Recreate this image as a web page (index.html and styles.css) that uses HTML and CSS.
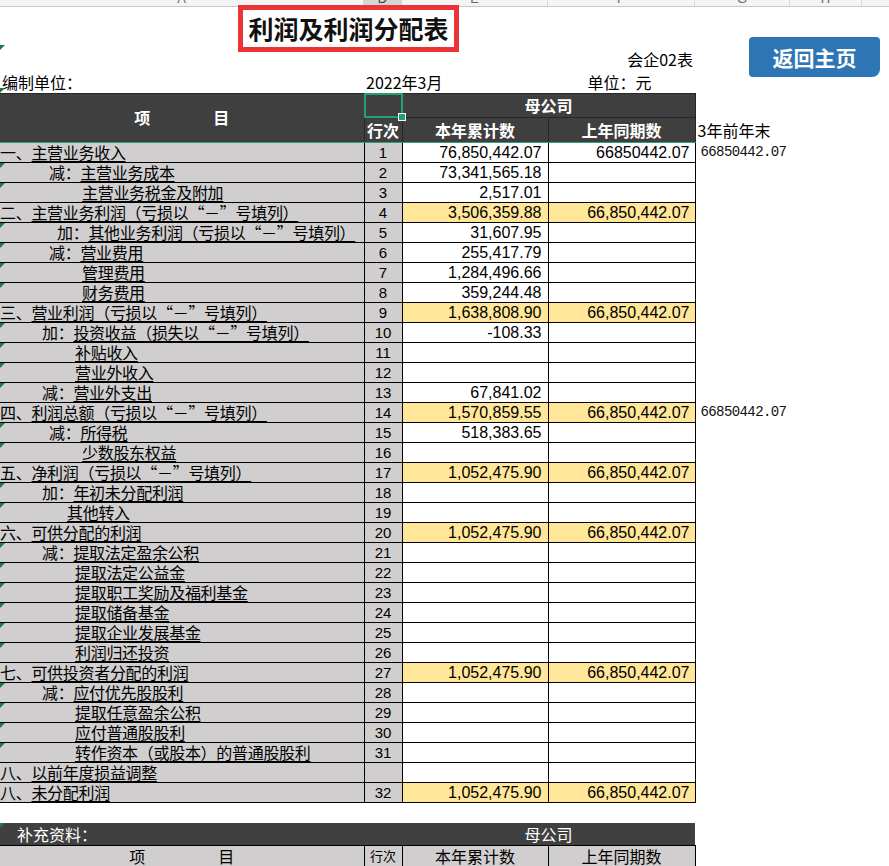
FILE: index.html
```html
<!DOCTYPE html>
<html lang="zh-CN">
<head>
<meta charset="utf-8">
<title>利润及利润分配表</title>
<link rel="stylesheet" href="styles.css">
</head>
<body>
<div class="colheads">
  <div class="ch ch-a"><span>A</span></div>
  <div class="ch ch-d"><span>D</span></div>
  <div class="ch ch-e"><span>E</span></div>
  <div class="ch ch-f"><span>F</span></div>
  <div class="ch ch-g"><span>G</span></div>
  <div class="ch ch-h"><span>H</span></div>
  <div class="ch ch-i"></div>
</div>

<div class="top">
  <div class="title-row mk-row"><h1 class="title">利润及利润分配表</h1></div>
  <div class="form-row">会企02表</div>
  <div class="info-row mk-row">
    <span class="unit-name">编制单位：</span>
    <span class="period">2022年3月</span>
    <span class="unit">单位：元</span>
  </div>
</div>

<a class="home-btn">返回主页</a>

<table class="report">
  <colgroup>
    <col class="c-a"><col class="c-d"><col class="c-e"><col class="c-f"><col class="c-g"><col>
  </colgroup>
  <thead>
    <tr class="h1">
      <th rowspan="2" class="item"><span>项</span><span>目</span></th>
      <th class="sel"></th>
      <th colspan="2">母公司</th>
      <td class="g"></td><td class="rest"></td>
    </tr>
    <tr class="h2">
      <th>行次</th><th>本年累计数</th><th>上年同期数</th>
      <td class="g extra">3年前年末</td><td class="rest"></td>
    </tr>
  </thead>
  <tbody>
    <tr><td class="lbl">一、<span class="u">主营业务收入</span></td><td class="no">1</td><td class="num">76,850,442.07</td><td class="num f">66850442.07</td><td class="g mono">66850442.07</td><td class="rest"></td></tr>
    <tr><td class="lbl mk p49">减：<span class="u">主营业务成本</span></td><td class="no">2</td><td class="num">73,341,565.18</td><td class="num f"></td><td class="g"></td><td class="rest"></td></tr>
    <tr><td class="lbl mk p82"><span class="u">主营业务税金及附加</span></td><td class="no">3</td><td class="num">2,517.01</td><td class="num f"></td><td class="g"></td><td class="rest"></td></tr>
    <tr class="hl"><td class="lbl">二、<span class="u">主营业务利润（亏损以“－”号填列）</span></td><td class="no">4</td><td class="num">3,506,359.88</td><td class="num f">66,850,442.07</td><td class="g"></td><td class="rest"></td></tr>
    <tr><td class="lbl mk p57">加：<span class="u">其他业务利润（亏损以“－”号填列）</span></td><td class="no">5</td><td class="num">31,607.95</td><td class="num f"></td><td class="g"></td><td class="rest"></td></tr>
    <tr><td class="lbl mk p49">减：<span class="u">营业费用</span></td><td class="no">6</td><td class="num">255,417.79</td><td class="num f"></td><td class="g"></td><td class="rest"></td></tr>
    <tr><td class="lbl mk p82"><span class="u">管理费用</span></td><td class="no">7</td><td class="num">1,284,496.66</td><td class="num f"></td><td class="g"></td><td class="rest"></td></tr>
    <tr><td class="lbl mk p82"><span class="u">财务费用</span></td><td class="no">8</td><td class="num">359,244.48</td><td class="num f"></td><td class="g"></td><td class="rest"></td></tr>
    <tr class="hl"><td class="lbl">三、<span class="u">营业利润（亏损以“－”号填列）</span></td><td class="no">9</td><td class="num">1,638,808.90</td><td class="num f">66,850,442.07</td><td class="g"></td><td class="rest"></td></tr>
    <tr><td class="lbl mk p42">加：<span class="u">投资收益（损失以“－”号填列）</span></td><td class="no">10</td><td class="num">-108.33</td><td class="num f"></td><td class="g"></td><td class="rest"></td></tr>
    <tr><td class="lbl mk p75"><span class="u">补贴收入</span></td><td class="no">11</td><td class="num"></td><td class="num f"></td><td class="g"></td><td class="rest"></td></tr>
    <tr><td class="lbl mk p75"><span class="u">营业外收入</span></td><td class="no">12</td><td class="num"></td><td class="num f"></td><td class="g"></td><td class="rest"></td></tr>
    <tr><td class="lbl mk p42">减：<span class="u">营业外支出</span></td><td class="no">13</td><td class="num">67,841.02</td><td class="num f"></td><td class="g"></td><td class="rest"></td></tr>
    <tr class="hl"><td class="lbl">四、<span class="u">利润总额（亏损以“－”号填列）</span></td><td class="no">14</td><td class="num">1,570,859.55</td><td class="num f">66,850,442.07</td><td class="g mono">66850442.07</td><td class="rest"></td></tr>
    <tr><td class="lbl mk p49">减：<span class="u">所得税</span></td><td class="no">15</td><td class="num">518,383.65</td><td class="num f"></td><td class="g"></td><td class="rest"></td></tr>
    <tr><td class="lbl mk p82"><span class="u">少数股东权益</span></td><td class="no">16</td><td class="num"></td><td class="num f"></td><td class="g"></td><td class="rest"></td></tr>
    <tr class="hl"><td class="lbl">五、<span class="u">净利润（亏损以“－”号填列）</span></td><td class="no">17</td><td class="num">1,052,475.90</td><td class="num f">66,850,442.07</td><td class="g"></td><td class="rest"></td></tr>
    <tr><td class="lbl mk p42">加：<span class="u">年初未分配利润</span></td><td class="no">18</td><td class="num"></td><td class="num f"></td><td class="g"></td><td class="rest"></td></tr>
    <tr><td class="lbl mk p67"><span class="u">其他转入</span></td><td class="no">19</td><td class="num"></td><td class="num f"></td><td class="g"></td><td class="rest"></td></tr>
    <tr class="hl"><td class="lbl">六、<span class="u">可供分配的利润</span></td><td class="no">20</td><td class="num">1,052,475.90</td><td class="num f">66,850,442.07</td><td class="g"></td><td class="rest"></td></tr>
    <tr><td class="lbl mk p42">减：<span class="u">提取法定盈余公积</span></td><td class="no">21</td><td class="num"></td><td class="num f"></td><td class="g"></td><td class="rest"></td></tr>
    <tr><td class="lbl mk p75"><span class="u">提取法定公益金</span></td><td class="no">22</td><td class="num"></td><td class="num f"></td><td class="g"></td><td class="rest"></td></tr>
    <tr><td class="lbl mk p75"><span class="u">提取职工奖励及福利基金</span></td><td class="no">23</td><td class="num"></td><td class="num f"></td><td class="g"></td><td class="rest"></td></tr>
    <tr><td class="lbl mk p75"><span class="u">提取储备基金</span></td><td class="no">24</td><td class="num"></td><td class="num f"></td><td class="g"></td><td class="rest"></td></tr>
    <tr><td class="lbl mk p75"><span class="u">提取企业发展基金</span></td><td class="no">25</td><td class="num"></td><td class="num f"></td><td class="g"></td><td class="rest"></td></tr>
    <tr><td class="lbl mk p75"><span class="u">利润归还投资</span></td><td class="no">26</td><td class="num"></td><td class="num f"></td><td class="g"></td><td class="rest"></td></tr>
    <tr class="hl"><td class="lbl">七、<span class="u">可供投资者分配的利润</span></td><td class="no">27</td><td class="num">1,052,475.90</td><td class="num f">66,850,442.07</td><td class="g"></td><td class="rest"></td></tr>
    <tr><td class="lbl mk p42">减：<span class="u">应付优先股股利</span></td><td class="no">28</td><td class="num"></td><td class="num f"></td><td class="g"></td><td class="rest"></td></tr>
    <tr><td class="lbl mk p75"><span class="u">提取任意盈余公积</span></td><td class="no">29</td><td class="num"></td><td class="num f"></td><td class="g"></td><td class="rest"></td></tr>
    <tr><td class="lbl mk p75"><span class="u">应付普通股股利</span></td><td class="no">30</td><td class="num"></td><td class="num f"></td><td class="g"></td><td class="rest"></td></tr>
    <tr><td class="lbl mk p75"><span class="u">转作资本（或股本）的普通股股利</span></td><td class="no">31</td><td class="num"></td><td class="num f"></td><td class="g"></td><td class="rest"></td></tr>
    <tr><td class="lbl">八、<span class="u">以前年度损益调整</span></td><td class="no"></td><td class="num"></td><td class="num f"></td><td class="g"></td><td class="rest"></td></tr>
    <tr class="hl"><td class="lbl">八、<span class="u">未分配利润</span></td><td class="no">32</td><td class="num">1,052,475.90</td><td class="num f">66,850,442.07</td><td class="g"></td><td class="rest"></td></tr>
  </tbody>
</table>

<div class="spacer"></div>

<table class="supp">
  <colgroup>
    <col class="c-a"><col class="c-d"><col class="c-e"><col class="c-f"><col class="c-g"><col>
  </colgroup>
  <tr class="s1">
    <td class="s-title mk">补充资料：</td><td class="s-dark"></td><td colspan="2" class="s-dark s-center">母公司</td><td class="g"></td><td class="rest"></td>
  </tr>
  <tr class="s2">
    <td class="s-cell s-item"><span>项</span><span>目</span></td><td class="s-cell s-no">行次</td><td class="s-cell">本年累计数</td><td class="s-cell">上年同期数</td><td class="g"></td><td class="rest"></td>
  </tr>
</table>
</body>
</html>
```

FILE: styles.css
```css
* { box-sizing: border-box; }

html, body {
  margin: 0;
  padding: 0;
}

body {
  width: 889px;
  height: 866px;
  overflow: hidden;
  position: relative;
  background: #fff;
  color: #000;
  font-family: "Noto Sans CJK SC", "Liberation Sans", sans-serif;
}

/* spreadsheet column header strip */
.colheads {
  display: flex;
  height: 7px;
  background: #f4f4f4;
  border-bottom: 1px solid #c8c8c8;
  overflow: hidden;
}
.ch {
  height: 100%;
  border-right: 1px solid #d8d8d8;
  text-align: center;
  font: 13px "Liberation Sans", sans-serif;
  color: #6b6b6b;
  line-height: 12px;
  overflow: hidden;
}
.ch span { display: block; margin-top: -7px; }
.ch-a { width: 364px; }
.ch-d { width: 38px; background: #d4d4d4; color: #444; }
.ch-e { width: 146px; }
.ch-f { width: 147px; }
.ch-g { width: 95px; }
.ch-h { width: 72px; }
.ch-i { flex: 1; border-right: none; }

/* top area */
.top { width: 695px; }
.title-row {
  height: 43px;
  display: flex;
  justify-content: center;
  align-items: flex-start;
  position: relative;
}
.title {
  margin: -2px 0 0 2px;
  width: 221px;
  height: 47px;
  border: 5px solid #ec3437;
  background: #fff;
  font-size: 25px;
  font-weight: 700;
  line-height: 36px;
  text-align: center;
  color: #111;
}
.form-row {
  height: 22px;
  line-height: 18px;
  font-size: 16px;
  text-align: right;
  padding-right: 2px;
}
.info-row {
  height: 21px;
  line-height: 20px;
  font-size: 16px;
  display: grid;
  grid-template-columns: 364px 184px 147px;
  position: relative;
}
.unit-name { padding-left: 2px; }
.period { padding-left: 2px; white-space: nowrap; }
.unit { text-align: center; padding-right: 4px; }

.mk-row::before {
  content: "";
  position: absolute;
  left: 0;
  bottom: 0;
  border-top: 5px solid #1f7a3f;
  border-right: 5px solid transparent;
}

/* home button */
.home-btn {
  position: absolute;
  left: 749px;
  top: 37px;
  width: 131px;
  height: 40px;
  background: #2e75b6;
  color: #fff;
  font-size: 21px;
  font-weight: 700;
  display: flex;
  align-items: center;
  justify-content: center;
  border-radius: 4px 4px 8px 4px;
  text-decoration: none;
}

/* main table */
table {
  border-collapse: collapse;
  table-layout: fixed;
  width: 889px;
}
.c-a { width: 364px; }
.c-d { width: 38px; }
.c-e { width: 146px; }
.c-f { width: 147px; }
.c-g { width: 95px; }

.report thead th {
  background: #3f3f3f;
  color: #fff;
  font-size: 16px;
  font-weight: 700;
  border: 1px solid #262626;
  padding: 0;
  line-height: 20px;
}
.report .h1 th { height: 24px; padding-bottom: 2px; }
.report .h2 th { height: 22px; border-bottom: 1px solid #2f9f80; }
.report th.item { border-left: none; border-bottom: 1px solid #2f9f80; padding-bottom: 3px; }
.report th.item span + span { margin-left: 63px; }
.report .h2 td { border-bottom: 1px solid #2f9f80; }

.report th.sel { position: relative; }
.report th.sel::after {
  content: "";
  position: absolute;
  left: -1px;
  top: -1px;
  right: -1px;
  bottom: -1px;
  border: 2px solid #22a06f;
}
.report th.sel::before {
  content: "";
  position: absolute;
  right: -4px;
  bottom: -4px;
  width: 6px;
  height: 6px;
  background: #22a06f;
  border: 1px solid #fff;
  z-index: 2;
}

.extra {
  font-size: 16px;
  white-space: nowrap;
  padding-left: 2px;
  vertical-align: bottom;
  line-height: 23px;
}

.report tbody td {
  height: 20px;
  padding: 0;
  border-bottom: 1px solid #000;
  border-right: 1px solid #000;
  line-height: 19px;
  white-space: nowrap;
  overflow: hidden;
}
.report td.g, .report td.rest,
.supp td.g, .supp td.rest {
  border: none;
  background: #fff;
}
.report tbody td.g { overflow: visible; }

.lbl {
  background: #d0cece;
  font-size: 16px;
  letter-spacing: -0.3px;
  position: relative;
}
.u {
  text-decoration: underline;
  text-decoration-thickness: 1px;
  text-underline-offset: 2px;
}
.p42 { padding-left: 42px !important; }
.p49 { padding-left: 49px !important; }
.p57 { padding-left: 57px !important; }
.p67 { padding-left: 67px !important; }
.p75 { padding-left: 75px !important; }
.p82 { padding-left: 82px !important; }

.mk::before {
  content: "";
  position: absolute;
  left: 0;
  top: 0;
  border-top: 5px solid #1f7a3f;
  border-right: 5px solid transparent;
}

.no {
  background: #d0cece;
  text-align: center;
  font: 15px "Liberation Sans", sans-serif;
  vertical-align: bottom;
}
.num {
  text-align: right;
  font: 16px "Liberation Sans", sans-serif;
  padding-right: 6px !important;
  background: #fff;
}
.num.f { padding-right: 5px !important; }
.hl .num { background: #ffe699; }
.mono {
  font: 14px "Liberation Mono", monospace;
  letter-spacing: -0.6px;
  padding-left: 5px !important;
  color: #111;
}

.spacer { height: 20px; }

/* supplementary section */
.supp td { padding: 0; }
.supp .s1 td { height: 22px; }
.s-title, .s-dark {
  background: #404040;
  color: #fff;
  font-size: 16px;
  line-height: 20px;
}
.s-title { padding-left: 17px !important; position: relative; }
.s-center { text-align: center; }
.supp .s2 td { height: 22px; }
.supp td.s-cell {
  background: #d0cece;
  border-top: 1px solid #000;
  border-right: 1px solid #000;
  border-bottom: 1px solid #000;
  text-align: center;
  font-size: 16px;
  line-height: 20px;
}
.s-item span + span { margin-left: 73px; }
.supp td.s-no { font-size: 13px; }
```
